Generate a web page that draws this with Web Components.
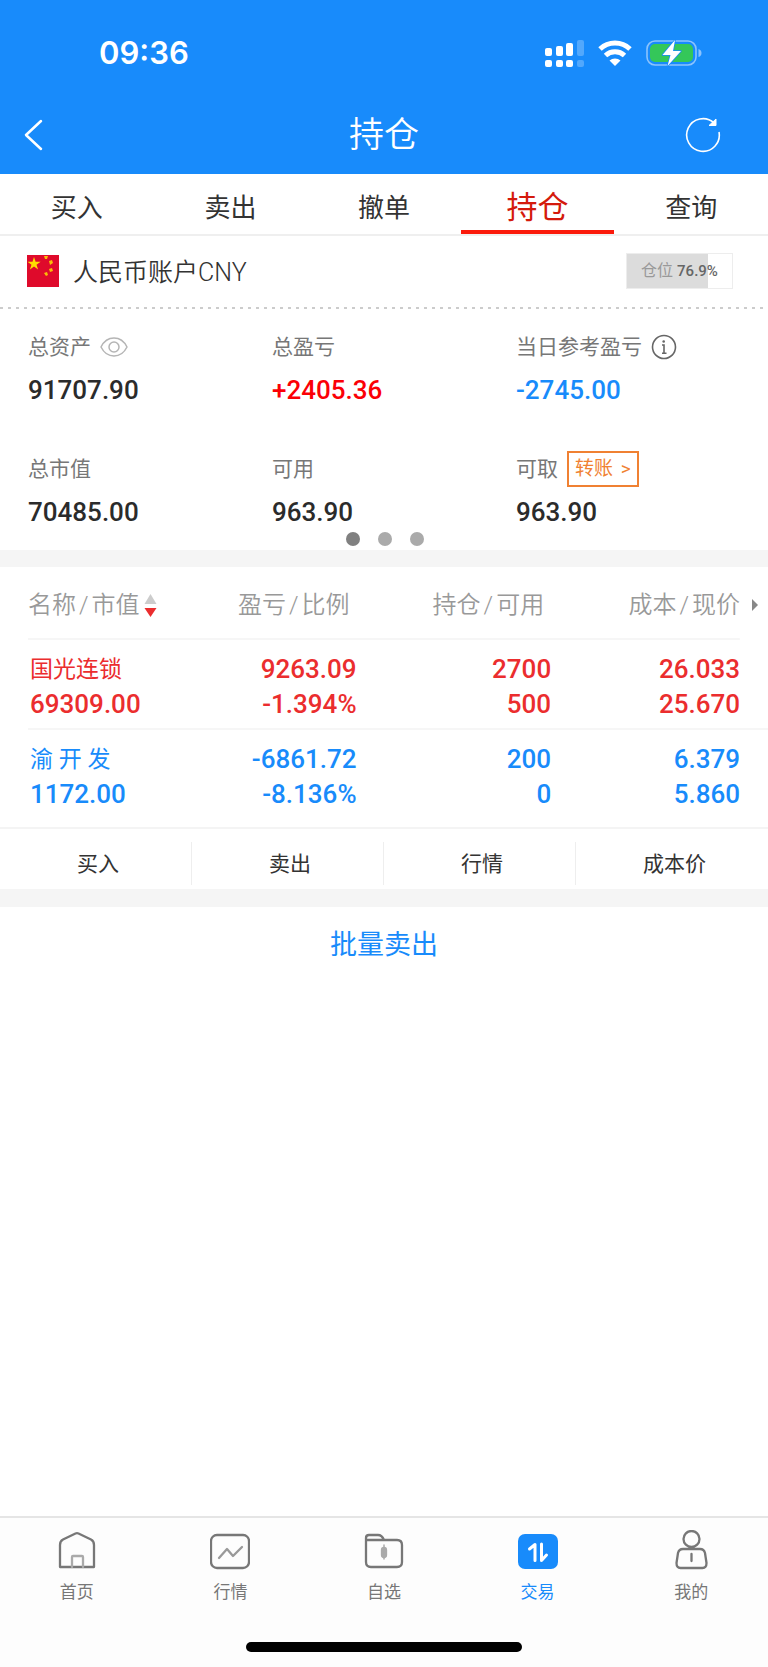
<!DOCTYPE html>
<html lang="zh-CN">
<head>
<meta charset="utf-8">
<meta name="viewport" content="width=device-width, initial-scale=1">
<title>持仓</title>
<style>
  body {
    margin: 0;
    background: #fff;
    color: #333;
    font-family: Roboto, "Noto Sans CJK SC", sans-serif;
  }
</style>
</head>
<body>
<trade-app></trade-app>

<script>
const BASE = `
  *, *::before { box-sizing: border-box; }
  button {
    margin: 0;
    padding: 0;
    border: 0;
    background: none;
    color: inherit;
    font: inherit;
  }
  a { color: inherit; text-decoration: none; }
  svg { display: block; }
`;

class BaseElement extends HTMLElement {
  constructor() {
    super();
    this.attachShadow({ mode: 'open' });
  }
  connectedCallback() {
    const template = document.createElement('template');
    template.innerHTML = `<style>${BASE}${this.getStyles()}</style>${this.getTemplate()}`;
    this.shadowRoot.replaceChildren(template.content.cloneNode(true));
  }
}

class StatusBar extends BaseElement {
  getStyles() {
    return `
      :host {
        display: flex;
        justify-content: space-between;
        align-items: center;
        height: 96px;
        padding: 9px 66px 0 99px;
        color: #fff;
        font: 600 31px/40px Inter, sans-serif;
      }
      div { display: flex; align-items: center; gap: 14px; }
    `;
  }
  getTemplate() {
    return `
      <time>09:36</time>
      <div>
        <svg width="40" height="28" viewBox="0 0 40 28" fill="#fff">
          <rect x="1" y="9" width="7" height="8" rx="2"/>
          <rect x="12" y="7" width="7" height="10" rx="2"/>
          <rect x="22" y="4" width="7" height="13" rx="2"/>
          <rect x="33" y="1" width="7" height="16" rx="2" opacity=".25"/>
          <rect x="1" y="21" width="7" height="7" rx="2"/>
          <rect x="12" y="21" width="7" height="7" rx="2"/>
          <rect x="22" y="21" width="7" height="7" rx="2"/>
          <rect x="33" y="21" width="7" height="7" rx="2" opacity=".25"/>
        </svg>
        <svg width="34" height="26" viewBox="0 0 34 26">
          <g fill="none" stroke="#fff" stroke-width="5">
            <path d="M2 9a22 22 0 0 1 30 0"/>
            <path d="M7.500 15.500a14 14 0 0 1 19 0"/>
          </g>
          <path d="M11.500 20.500a8.500 8.500 0 0 1 11 0L17 26z" fill="#fff"/>
        </svg>
        <svg width="56" height="28" viewBox="0 0 56 28">
          <rect x="1" y="2" width="49" height="24" rx="8" fill="none" stroke="#8cc3fd" stroke-width="1.600"/>
          <path d="M52.500 10q3 1 3 4t-3 4z" fill="#8cc3fd"/>
          <rect x="4" y="5" width="43" height="18" rx="5" fill="#34c759"/>
          <path d="M29 1 16.500 16h8L21.500 27 35 12h-8z" fill="#fff" stroke="#188bfb" stroke-width="1.500" stroke-linejoin="round" paint-order="stroke"/>
        </svg>
      </div>
    `;
  }
}

class TitleBar extends BaseElement {
  getStyles() {
    return `
      :host {
        display: grid;
        grid-template-columns: 1fr auto 1fr;
        align-items: center;
        height: 78px;
        padding: 0 47px 0 23px;
        color: #fff;
      }
      h1 {
        margin: 0;
        padding: 2px 0 0 24px;
        font-size: 35px;
        font-weight: 350;
        line-height: 48px;
      }
      button:last-child { justify-self: end; }
    `;
  }
  getTemplate() {
    return `
      <button type="button" aria-label="返回">
        <svg width="20" height="32" viewBox="0 0 20 32" fill="none" stroke="#fff" stroke-width="2.500" stroke-linecap="round" stroke-linejoin="round">
          <path d="M18 2 3 16l15 14"/>
        </svg>
      </button>
      <h1><slot></slot></h1>
      <button type="button" aria-label="刷新">
        <svg width="36" height="36" viewBox="0 0 36 36">
          <path d="M34 15A16.300 16.300 0 1 1 29 6" fill="none" stroke="#fff" stroke-width="1.600"/>
          <path d="M24 8.500h7V2z" fill="#fff" stroke="#fff"/>
        </svg>
      </button>
    `;
  }
}

class TradeTabs extends BaseElement {
  getStyles() {
    return `
      :host {
        display: block;
        border-bottom: 2px solid #efefef;
        background: #fff;
      }
      nav { display: grid; grid-template-columns: repeat(5, 1fr); height: 60px; }
      a {
        display: flex;
        justify-content: center;
        align-items: center;
        padding-top: 11px;
        border-bottom: 4px solid transparent;
        font-size: 26px;
        line-height: 40px;
      }
      a[aria-current] {
        border-color: #fb1a0b;
        color: #d41a0c;
        font-size: 31px;
      }
    `;
  }
  getTemplate() {
    const current = this.getAttribute('current');
    return `
      <nav>
        ${['买入', '卖出', '撤单', '持仓', '查询'].map((name) =>
          `<a href="#"${name === current ? ' aria-current="page"' : ''}>${name}</a>`).join('')}
      </nav>
    `;
  }
}

class AccountRow extends BaseElement {
  getStyles() {
    return `
      :host {
        display: flex;
        align-items: center;
        height: 73px;
        padding: 0 35px 3px 27px;
        background: repeating-linear-gradient(90deg, #ccc 0 3px, transparent 3px 8px) left bottom / 100% 2px no-repeat;
      }
      h2 {
        flex: 1;
        margin: 0 0 0 14px;
        padding-top: 4px;
        font-size: 25px;
        font-weight: 350;
        line-height: 36px;
      }
      .ratio {
        width: 107px;
        border: 1px solid #ededed;
        background: linear-gradient(90deg, #dcdcdc 77%, #fff 77%);
        color: #999;
        font-size: 16px;
        line-height: 34px;
        text-align: center;
      }
      b { color: #666; font-size: 15px; font-weight: 500; }
    `;
  }
  getTemplate() {
    return `
      <svg width="32" height="32" viewBox="0 0 32 32" fill="#ffde00">
        <path d="M0 0h32v32H0z" fill="#df0a2b"/>
        <path d="m7 2 1.600 4.800h5L9.500 9.700l1.600 4.800L7 11.500l-4.100 3 1.600-4.800L.5 6.800h5z"/>
        <path d="M17 1h4l-1 3h-2zM22 6l3-1 1 3-3 2zM22 14l3-1 1 3-3 1zM17 18l3-1 1 3-2 1z" opacity=".85"/>
      </svg>
      <h2>人民币账户CNY</h2>
      <div class="ratio">仓位 <b>76.9%</b></div>
    `;
  }
}

class AssetItem extends BaseElement {
  getStyles() {
    return `
      :host { display: block; white-space: nowrap; }
      .label {
        display: flex;
        align-items: center;
        gap: 9px;
        height: 36px;
        color: #777;
        font-size: 21px;
        line-height: 28px;
      }
      .value {
        margin-top: 9px;
        font-size: 26px;
        font-weight: 500;
        line-height: 32px;
      }
    `;
  }
  getTemplate() {
    return `
      <div class="label">${this.getAttribute('label')}<slot></slot></div>
      <div class="value">${this.getAttribute('value')}</div>
    `;
  }
}

class AssetPanel extends BaseElement {
  getStyles() {
    return `
      :host { display: block; padding-top: 20px; border-bottom: 17px solid #f5f5f5; }
      .grid {
        display: grid;
        grid-template-columns: repeat(3, 1fr);
        row-gap: 45px;
        padding: 0 8px 0 28px;
      }
      asset-item { color: #2b2b2b; }
      .up { color: #fb0006; }
      .down { color: #188bfb; }
      .transfer {
        height: 36px;
        padding: 0 6px;
        border: 2px solid #f08132;
        color: #f08132;
        font-size: 19px;
      }
      .transfer span { margin-left: 3px; }
      .dots { display: flex; justify-content: center; gap: 18px; margin: 4px 0 4px; padding-left: 1px; }
      .dots i { width: 14px; height: 14px; border-radius: 50%; background: #aaa; }
      .dots i:first-child { background: #808080; }
    `;
  }
  getTemplate() {
    return `
      <div class="grid">
        <asset-item label="总资产" value="91707.90">
          <button type="button" aria-label="隐藏资产">
            <svg width="28" height="20" viewBox="0 0 28 20" fill="none" stroke="#b5b5b5" stroke-width="1.500">
              <path d="M1 10C7-2 21-2 27 10 21 22 7 22 1 10z"/>
              <circle cx="14" cy="10" r="5"/>
            </svg>
          </button>
        </asset-item>
        <asset-item class="up" label="总盈亏" value="+2405.36"></asset-item>
        <asset-item class="down" label="当日参考盈亏" value="-2745.00">
          <button type="button" aria-label="说明">
            <svg width="26" height="26" viewBox="0 0 26 26" fill="none" stroke="#666" stroke-width="1.600">
              <circle cx="13" cy="13" r="11.500"/>
              <path d="M11 11h2v8M11 19.300h4.500"/>
              <circle cx="12.700" cy="7.500" r="1.300" fill="#666" stroke="none"/>
            </svg>
          </button>
        </asset-item>
        <asset-item label="总市值" value="70485.00"></asset-item>
        <asset-item label="可用" value="963.90"></asset-item>
        <asset-item label="可取" value="963.90">
          <button type="button" class="transfer">转账 <span>&gt;</span></button>
        </asset-item>
      </div>
      <div class="dots"><i></i><i></i><i></i></div>
    `;
  }
}

class HoldingTable extends BaseElement {
  constructor() {
    super();
    this.rows = [
      { type: 'up', cells: [['国光连锁', '69309.00'], ['9263.09', '-1.394%'], ['2700', '500'], ['26.033', '25.670']] },
      { type: 'down', cells: [['渝 开 发', '1172.00'], ['-6861.72', '-8.136%'], ['200', '0'], ['6.379', '5.860']] },
    ];
  }
  getStyles() {
    return `
      :host { display: block; padding-left: 28px; }
      table { width: 100%; border-collapse: collapse; table-layout: fixed; }
      th, td { padding: 0; text-align: right; white-space: nowrap; }
      th:first-child, td:first-child { text-align: left; }
      th { height: 73px; padding: 0 7px 3px 0; color: #999; font-size: 24px; font-weight: 350; }
      th:last-child { padding-right: 10px; }
      thead tr { background: linear-gradient(#f6f6f6, #f6f6f6) left bottom / calc(100% - 28px) 2px no-repeat; }
      th:nth-child(1) { width: 24.4%; }
      th:nth-child(2) { width: 20%; }
      th:nth-child(3) { width: 26.3%; }
      th i { margin: 0 3px; font-style: normal; }
      th svg { display: inline-block; vertical-align: middle; }
      .arrow { margin: -2px 0 0 12px; }
      .sort { margin-left: 4px; }
      td { padding: 12px 0 6px; font-size: 26px; font-weight: 500; line-height: 35px; }
      td:first-child { padding-left: 2px; }
      td:last-child { padding-right: 28px; }
      td div:first-child { height: 35px; }
      .name { font-size: 23px; font-weight: 400; }
      .up { color: #eb2d2e; border-bottom: 2px solid #f6f6f6; }
      .down { color: #188bfb; }
      .down td { padding-bottom: 15px; }
    `;
  }
  getTemplate() {
    return `
      <table>
        <thead>
          <tr>
            <th scope="col">名称<i>/</i>市值<svg class="sort" width="13" height="24" viewBox="0 0 13 24"><path d="M6.500 0 12.500 10H.5z" fill="#ccc"/><path d="M.5 14h12l-6 9z" fill="#eb2d2e"/></svg></th>
            <th scope="col">盈亏<i>/</i>比例</th>
            <th scope="col">持仓<i>/</i>可用</th>
            <th scope="col">成本<i>/</i>现价<svg class="arrow" width="6" height="12" viewBox="0 0 6 12"><path d="m0 0 6 6-6 6z" fill="#888"/></svg></th>
          </tr>
        </thead>
        <tbody>
          ${this.rows.map((row) => `
            <tr class="${row.type}">
              ${row.cells.map(([top, bottom], i) =>
                `<td><div${i === 0 ? ' class="name"' : ''}>${top}</div><div>${bottom}</div></td>`).join('')}
            </tr>
          `).join('')}
        </tbody>
      </table>
    `;
  }
}

class RowActions extends BaseElement {
  getStyles() {
    return `
      :host {
        display: grid;
        grid-template-columns: repeat(4, 1fr);
        padding: 13px 0 4px;
        border-top: 2px solid #f4f4f4;
        border-bottom: 18px solid #f5f5f5;
      }
      button { height: 43px; padding: 0 0 4px 5px; border-right: 1px solid #eee; font-size: 21px; }
      button:last-child { border: 0; }
    `;
  }
  getTemplate() {
    return ['买入', '卖出', '行情', '成本价']
      .map((name) => `<button type="button">${name}</button>`).join('');
  }
}

const ICONS = {
  home: '<path d="M3 15q0-4 3-5.500L18.500 3.500q1.500-.7 3 0L34 9.500q3 1.500 3 5.500v22H3z"/><path d="M15 37V27q0-1 1-1h9q1 0 1 1v10" stroke="#aaa"/>',
  chart: '<rect x="1" y="5" width="38" height="33" rx="6"/><path d="m9 28 8-9 6 7 9-9" stroke="#999"/>',
  folder: '<path d="M2 10V8q0-3 3-3h9q4 0 6 5h13q5 0 5 5v17q0 5-5 5H7q-5 0-5-5zh18"/><path d="M20 15v14" stroke="#aaa" stroke-width="1.500"/><rect x="18" y="18" width="4" height="9" rx="2" fill="#aaa" stroke="#aaa"/>',
  trade: '<rect x="0" y="4" width="40" height="35" rx="7" fill="#188bfb" stroke="none"/><path d="m11.500 19 5.500-4.500v16M23.500 14v16.500l5-5.500" stroke="#fff" stroke-width="3"/>',
  mine: '<circle cx="20.500" cy="9" r="8"/><path d="M12 19h17q4 0 5 4l1.500 10q0 5-4 5h-22q-4 0-4-5L7 23q1-4 5-4z"/><path d="M20.500 24v7"/>',
};

class NavItem extends BaseElement {
  getStyles() {
    return `
      :host { display: block; color: #777; }
      :host([active]) { color: #188bfb; }
      a { display: flex; flex-direction: column; align-items: center; gap: 9px; font-size: 17px; line-height: 26px; }
    `;
  }
  getTemplate() {
    return `
      <a href="#">
        <svg width="40" height="40" viewBox="0 0 40 40" fill="none" stroke="#777" stroke-width="2.300" stroke-linecap="round" stroke-linejoin="round">${ICONS[this.getAttribute('icon')]}</svg>
        <span><slot></slot></span>
      </a>
    `;
  }
}

class BottomNav extends BaseElement {
  getStyles() {
    return `
      :host { display: block; padding: 12px 0 15px; border-top: 2px solid #e5e5e5; background: #fdfdfd; }
      nav { display: grid; grid-template-columns: repeat(5, 1fr); }
      .indicator { width: 36%; height: 10px; margin: 37px auto 0; border-radius: 5px; background: #000; }
    `;
  }
  getTemplate() {
    return `
      <nav>
        <nav-item icon="home">首页</nav-item>
        <nav-item icon="chart">行情</nav-item>
        <nav-item icon="folder">自选</nav-item>
        <nav-item icon="trade" active>交易</nav-item>
        <nav-item icon="mine">我的</nav-item>
      </nav>
      <div class="indicator"></div>
    `;
  }
}

class TradeApp extends BaseElement {
  getStyles() {
    return `
      :host { display: flex; flex-direction: column; min-height: 100vh; }
      header { background: #188bfb; }
      main { flex: 1; }
      .batch {
        display: block;
        margin: 18px auto;
        color: #188bfb;
        font-size: 27px;
        line-height: 40px;
      }
    `;
  }
  getTemplate() {
    return `
      <header>
        <status-bar></status-bar>
        <title-bar>持仓</title-bar>
      </header>
      <trade-tabs current="持仓"></trade-tabs>
      <main>
        <account-row></account-row>
        <asset-panel></asset-panel>
        <holding-table></holding-table>
        <row-actions></row-actions>
        <button type="button" class="batch">批量卖出</button>
      </main>
      <bottom-nav></bottom-nav>
    `;
  }
}

customElements.define('status-bar', StatusBar);
customElements.define('title-bar', TitleBar);
customElements.define('trade-tabs', TradeTabs);
customElements.define('account-row', AccountRow);
customElements.define('asset-item', AssetItem);
customElements.define('asset-panel', AssetPanel);
customElements.define('holding-table', HoldingTable);
customElements.define('row-actions', RowActions);
customElements.define('nav-item', NavItem);
customElements.define('bottom-nav', BottomNav);
customElements.define('trade-app', TradeApp);
</script>
</body>
</html>
